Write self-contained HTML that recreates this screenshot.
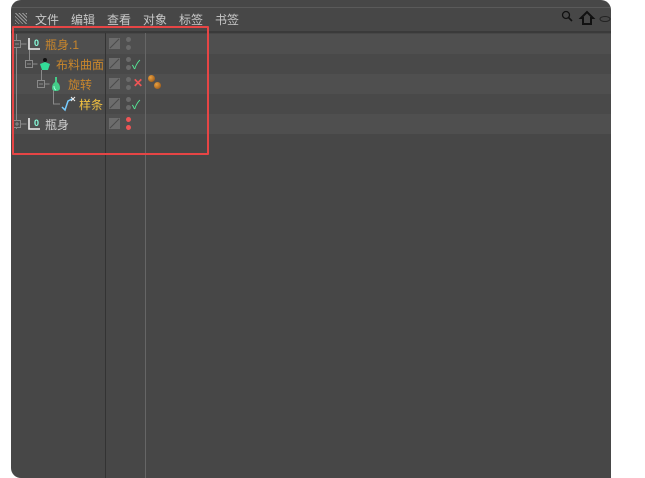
<!DOCTYPE html><html><head><meta charset="utf-8"><style>
body{margin:0;width:645px;height:478px;background:#fff;position:relative;overflow:hidden;font-family:"Liberation Sans","Noto Sans CJK SC",sans-serif;font-size:12px}
.p{position:absolute;left:11px;top:0;width:600px;height:478px;background:#474747;border-radius:10px 10px 0 10px;overflow:hidden}
.a{position:absolute}
.m{position:absolute;top:11px;color:#c8c8c8}
.row{position:absolute;left:0;width:600px;height:20px}
.t{position:absolute;white-space:nowrap}
.sq{position:absolute;left:98px;width:11px;height:11px;background:#6c6c6c}
.sq:after{content:"";position:absolute;left:5px;top:-1px;width:1px;height:13px;background:#4a4a4a;transform:rotate(45deg)}
.d{position:absolute;left:115px;width:5px;height:5px;border-radius:50%;background:#6a6a6a}
</style></head><body>
<div class="p">
<div class="a" style="left:0;top:7px;width:600px;height:1px;background:#5a5a5a"></div>
<div class="a" style="left:4px;top:13px;width:12px;height:11px;background:repeating-linear-gradient(45deg,#9a9a9a 0 1px,#474747 1px 2.5px)"></div>
<div class="m" style="left:24px">文件</div><div class="m" style="left:60px">编辑</div><div class="m" style="left:96px">查看</div><div class="m" style="left:132px">对象</div><div class="m" style="left:168px">标签</div><div class="m" style="left:204px">书签</div>
<svg class="a" style="left:550px;top:10px" width="50" height="18"><circle cx="5" cy="5" r="3.5" fill="none" stroke="#111" stroke-width="1.3"/><path d="M7.5 7.5L11 11" stroke="#111" stroke-width="1.6"/><path d="M20 8L26 2L32 8H30V14H22V8Z" fill="none" stroke="#111" stroke-width="2"/><ellipse cx="44" cy="9" rx="5" ry="2.5" fill="none" stroke="#222"/></svg>
<div class="a" style="left:0;top:31px;width:600px;height:2px;background:#3a3a3a"></div>
<div class="row" style="top:34px;background:#4f4f4f"></div>
<div class="row" style="top:54px;background:#494949"></div>
<div class="row" style="top:74px;background:#4f4f4f"></div>
<div class="row" style="top:94px;background:#494949"></div>
<div class="row" style="top:114px;background:#4f4f4f"></div>
<div class="a" style="left:94px;top:33px;width:1px;height:445px;background:#333"></div>
<div class="a" style="left:134px;top:33px;width:1px;height:445px;background:#666"></div>
<svg class="a" style="left:0;top:34px" width="95" height="100" fill="none" stroke="#8a8a8a" stroke-width="1">
<path d="M5.5 0V95"/><rect x="2.5" y="6.5" width="7" height="7" fill="#4f4f4f"/><path d="M4 10h4M9.5 10h6"/>
<rect x="2.5" y="86.5" width="7" height="7" fill="#4f4f4f"/><path d="M4 90h4M6 88v4M9.5 90h6"/>
<path d="M18.5 16V30"/><rect x="14.5" y="26.5" width="7" height="7" fill="#494949"/><path d="M16 30h4M21.5 30h5"/>
<path d="M30.5 36V50"/><rect x="26.5" y="46.5" width="7" height="7" fill="#4f4f4f"/><path d="M28 50h4M33.5 50h5"/>
<path d="M42.5 56V70H49"/>
</svg>
<svg class="a" style="left:17px;top:37px" width="14" height="14"><path d="M1 1V12H12" stroke="#eee" stroke-width="1.6" fill="none"/><text x="6" y="9" font-size="9" fill="#8fd" font-weight="bold" font-family="Liberation Sans">0</text></svg>
<div class="t" style="left:34px;top:36px;color:#c8862c">瓶身.1</div>
<svg class="a" style="left:28px;top:57px" width="12" height="14"><circle cx="6" cy="3" r="2" fill="#111"/><path d="M1 7L6 5L11 7L9 13H3Z" fill="#3d9"/></svg>
<div class="t" style="left:45px;top:56px;color:#c8862c">布料曲面</div>
<svg class="a" style="left:40px;top:76px" width="10" height="16"><path d="M4 1H6V6Q9 8 9 12Q9 15 5 15Q1 15 1 12Q1 8 4 6Z" fill="#4c8"/><path d="M3 10Q3 13 5 14" stroke="#9fd" fill="none"/></svg>
<div class="t" style="left:57px;top:76px;color:#c8862c">旋转</div>
<svg class="a" style="left:50px;top:96px" width="16" height="16"><path d="M1 11L4 14L7 5L11 3" stroke="#7cf" stroke-width="1.5" fill="none"/><path d="M10 1L14 5M14 1L10 5" stroke="#eee"/></svg>
<div class="t" style="left:68px;top:96px;color:#f0c040">样条</div>
<svg class="a" style="left:17px;top:117px" width="14" height="14"><path d="M1 1V12H12" stroke="#eee" stroke-width="1.6" fill="none"/><text x="6" y="9" font-size="9" fill="#8fd" font-weight="bold" font-family="Liberation Sans">0</text></svg>
<div class="t" style="left:34px;top:116px;color:#cfcfcf">瓶身</div>
<div class="sq" style="top:38px"></div><div class="sq" style="top:58px"></div><div class="sq" style="top:78px"></div><div class="sq" style="top:98px"></div><div class="sq" style="top:118px"></div>
<div class="d" style="top:37px"></div><div class="d" style="top:45px"></div>
<div class="d" style="top:57px"></div><div class="d" style="top:65px"></div>
<div class="d" style="top:77px"></div><div class="d" style="top:85px"></div>
<div class="d" style="top:97px"></div><div class="d" style="top:105px"></div>
<div class="d" style="top:117px;background:#e55"></div><div class="d" style="top:125px;background:#e55"></div>
<div class="t" style="left:121px;top:56px;color:#5e9">✓</div>
<div class="t" style="left:122px;top:76px;color:#e55;font-weight:bold">✕</div>
<div class="t" style="left:121px;top:96px;color:#5e9">✓</div>
<div class="a" style="left:137px;top:75px;width:7px;height:7px;border-radius:50%;background:radial-gradient(circle at 35% 35%,#e9a040,#8a4a10)"></div>
<div class="a" style="left:143px;top:82px;width:7px;height:7px;border-radius:50%;background:radial-gradient(circle at 35% 35%,#e9a040,#8a4a10)"></div>
</div>
<div class="a" style="left:12px;top:26px;width:193px;height:125px;border:2px solid #e64545;border-radius:1px"></div>
</body></html>
